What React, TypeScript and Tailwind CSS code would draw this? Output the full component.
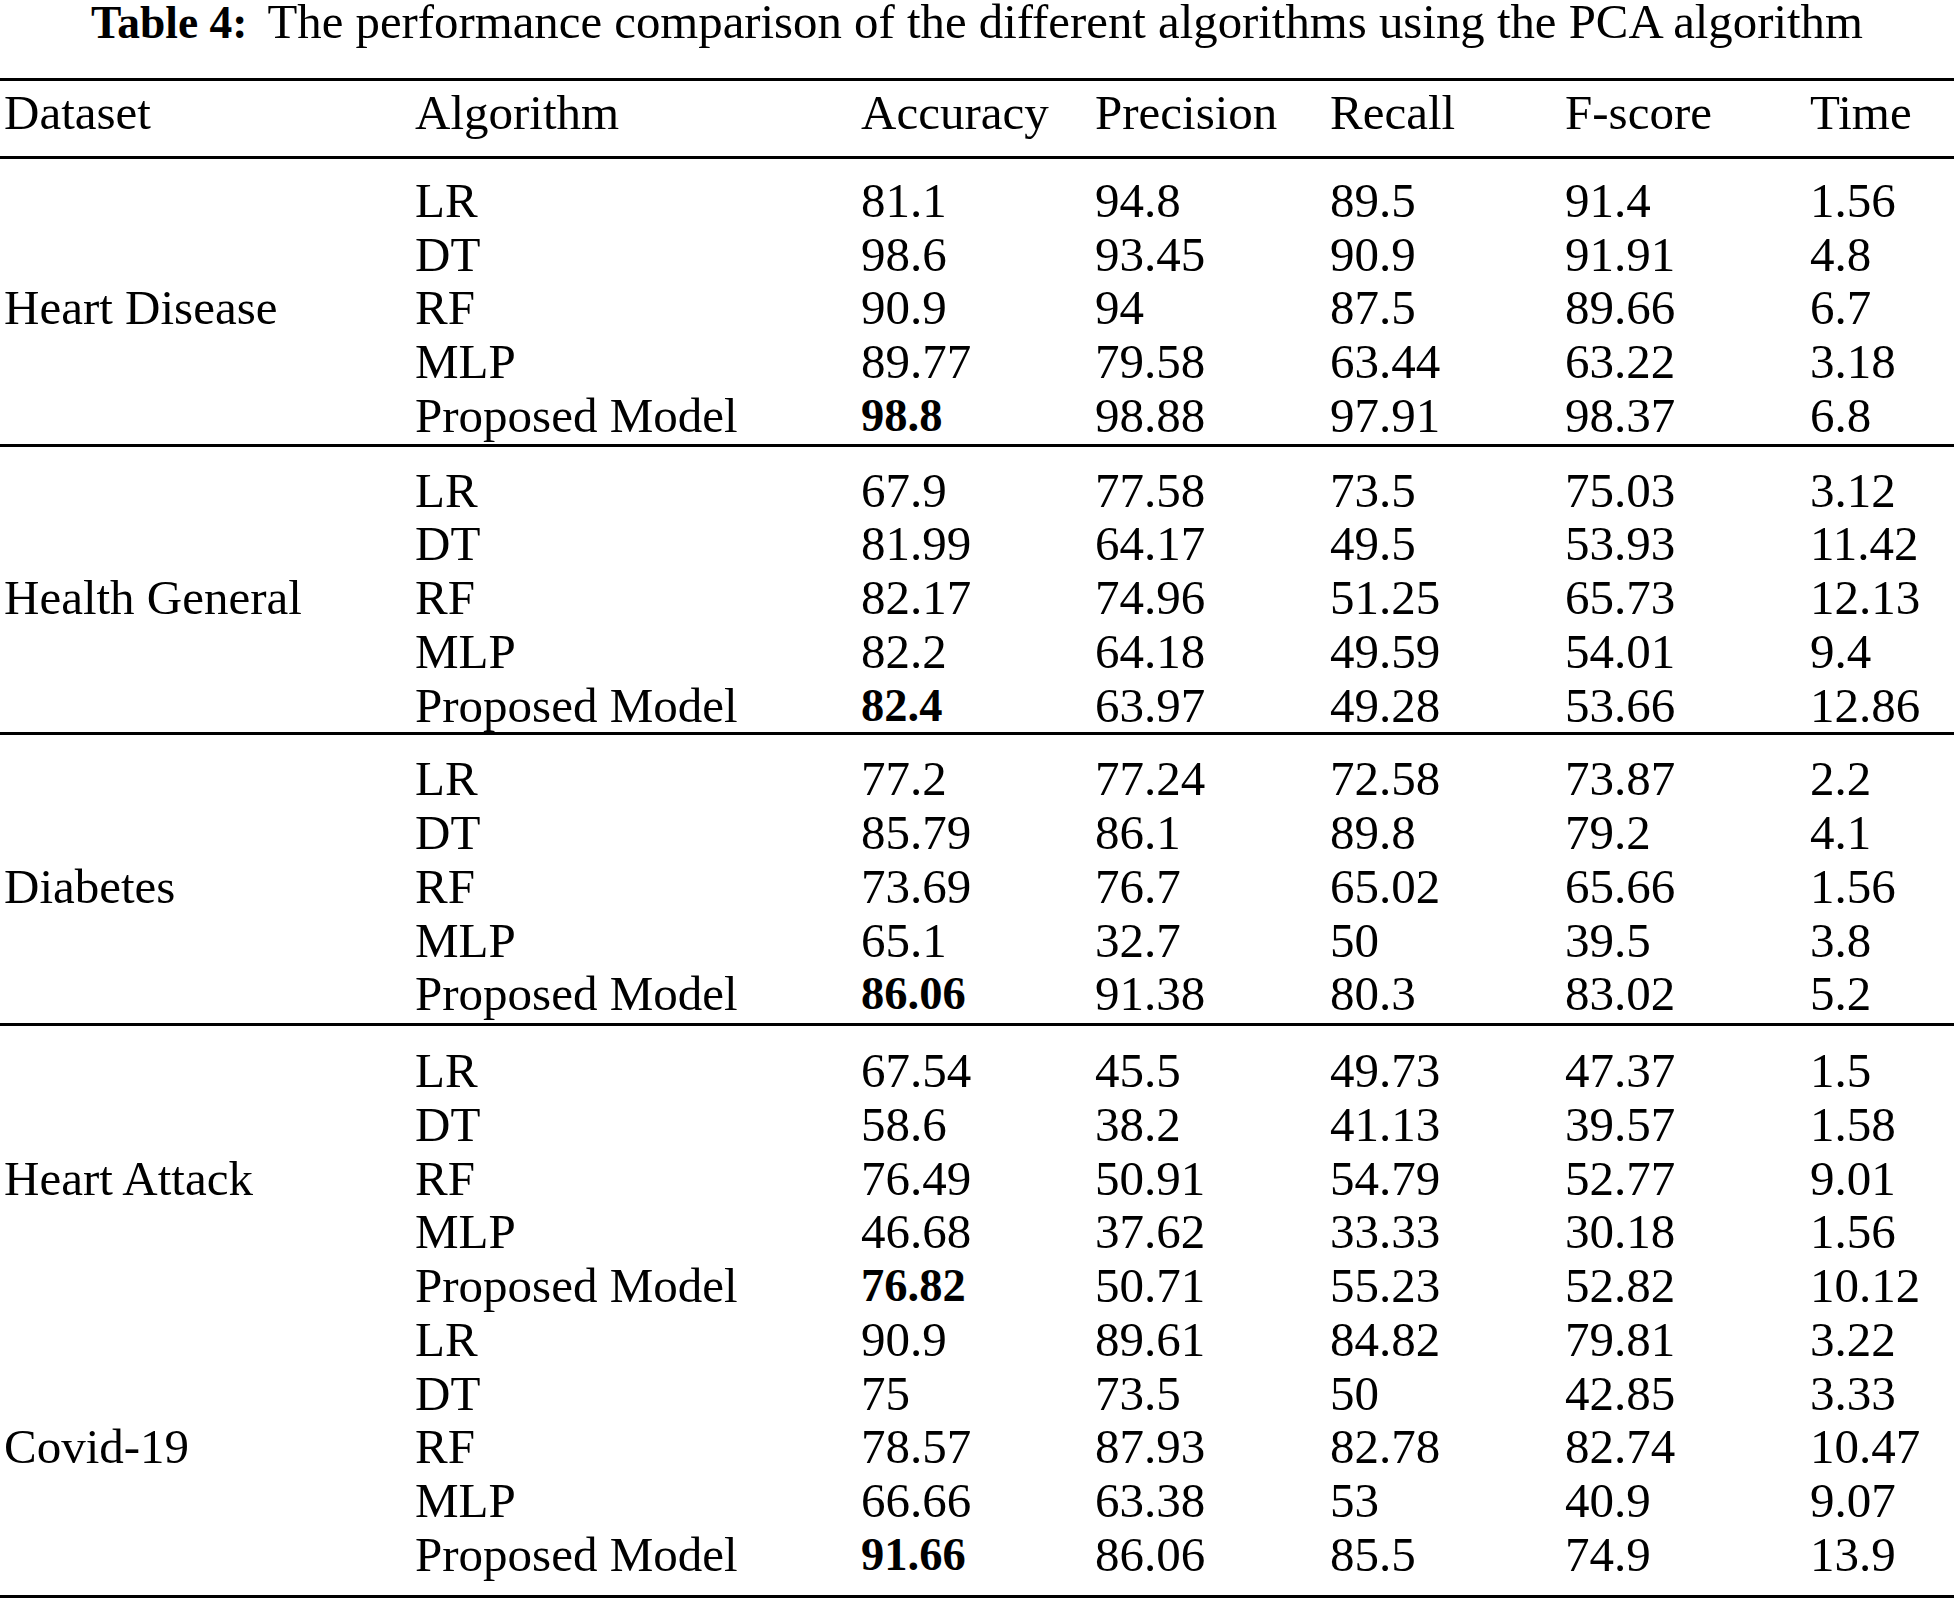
import React from "react";

type Row = [string, string, string, string, string, string];

const groups: { name: string; rows: Row[] }[] = [
  {
    name: "Heart Disease",
    rows: [
      ["LR", "81.1", "94.8", "89.5", "91.4", "1.56"],
      ["DT", "98.6", "93.45", "90.9", "91.91", "4.8"],
      ["RF", "90.9", "94", "87.5", "89.66", "6.7"],
      ["MLP", "89.77", "79.58", "63.44", "63.22", "3.18"],
      ["Proposed Model", "98.8", "98.88", "97.91", "98.37", "6.8"],
    ],
  },
  {
    name: "Health General",
    rows: [
      ["LR", "67.9", "77.58", "73.5", "75.03", "3.12"],
      ["DT", "81.99", "64.17", "49.5", "53.93", "11.42"],
      ["RF", "82.17", "74.96", "51.25", "65.73", "12.13"],
      ["MLP", "82.2", "64.18", "49.59", "54.01", "9.4"],
      ["Proposed Model", "82.4", "63.97", "49.28", "53.66", "12.86"],
    ],
  },
  {
    name: "Diabetes",
    rows: [
      ["LR", "77.2", "77.24", "72.58", "73.87", "2.2"],
      ["DT", "85.79", "86.1", "89.8", "79.2", "4.1"],
      ["RF", "73.69", "76.7", "65.02", "65.66", "1.56"],
      ["MLP", "65.1", "32.7", "50", "39.5", "3.8"],
      ["Proposed Model", "86.06", "91.38", "80.3", "83.02", "5.2"],
    ],
  },
  {
    name: "Heart Attack",
    rows: [
      ["LR", "67.54", "45.5", "49.73", "47.37", "1.5"],
      ["DT", "58.6", "38.2", "41.13", "39.57", "1.58"],
      ["RF", "76.49", "50.91", "54.79", "52.77", "9.01"],
      ["MLP", "46.68", "37.62", "33.33", "30.18", "1.56"],
      ["Proposed Model", "76.82", "50.71", "55.23", "52.82", "10.12"],
    ],
  },
  {
    name: "Covid-19",
    rows: [
      ["LR", "90.9", "89.61", "84.82", "79.81", "3.22"],
      ["DT", "75", "73.5", "50", "42.85", "3.33"],
      ["RF", "78.57", "87.93", "82.78", "82.74", "10.47"],
      ["MLP", "66.66", "63.38", "53", "40.9", "9.07"],
      ["Proposed Model", "91.66", "86.06", "85.5", "74.9", "13.9"],
    ],
  },
];

const gridCols =
  "grid grid-cols-[411px_446px_234px_235px_235px_245px_1fr] pl-[4px] leading-[53.75px]";

function Rule() {
  return <div className="h-[3px] w-full bg-black" />;
}

function Group({ name, rows }: { name: string; rows: Row[] }) {
  return (
    <div className={gridCols}>
      <div className="row-span-5 self-center">{name}</div>
      {rows.map((r, i) => (
        <React.Fragment key={i}>
          <div>{r[0]}</div>
          <div className={r[0] === "Proposed Model" ? "font-bold text-[46.5px]" : ""}>{r[1]}</div>
          <div>{r[2]}</div>
          <div>{r[3]}</div>
          <div>{r[4]}</div>
          <div>{r[5]}</div>
        </React.Fragment>
      ))}
    </div>
  );
}

export default function App() {
  return (
    <div className="w-[1954px] min-h-[1604px] bg-white text-black font-['Liberation_Serif','Times_New_Roman',serif] text-[49px]">
      <div className="h-[44px] text-center leading-[44px] whitespace-nowrap">
        <span className="font-bold text-[45.5px]">Table 4:</span>
        <span className="ml-[20px] text-[48.8px]">
          The performance comparison of the different algorithms using the PCA algorithm
        </span>
      </div>
      <div className="mt-[34px]">
        <Rule />
      </div>
      <div className={`${gridCols} pt-[5px] pb-[16px]`}>
        <div>Dataset</div>
        <div>Algorithm</div>
        <div>Accuracy</div>
        <div>Precision</div>
        <div>Recall</div>
        <div>F-score</div>
        <div>Time</div>
      </div>
      <Rule />
      <div className="pt-[15px] pb-[1px]">
        <Group {...groups[0]} />
      </div>
      <Rule />
      <div className="pt-[17px] pb-[0px]">
        <Group {...groups[1]} />
      </div>
      <Rule />
      <div className="pt-[17px] pb-[2px]">
        <Group {...groups[2]} />
      </div>
      <Rule />
      <div className="pt-[18px] pb-[13px]">
        <Group {...groups[3]} />
        <Group {...groups[4]} />
      </div>
      <Rule />
    </div>
  );
}
